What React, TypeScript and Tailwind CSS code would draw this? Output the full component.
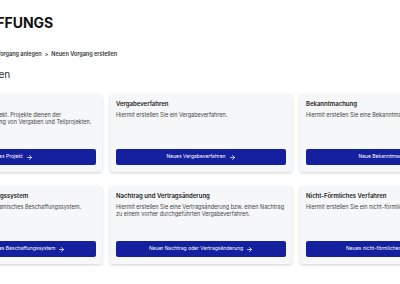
import { ArrowRight } from 'lucide-react';

interface VorgangCard {
  id: string;
  title: string;
  text: string;
  action: string;
}

const cards: VorgangCard[] = [
  {
    id: 'projekt',
    title: 'Projekt',
    text: 'Hiermit erstellen Sie ein Projekt. Projekte dienen der Strukturierung und Verwaltung von Vergaben und Teilprojekten.',
    action: 'Neues Projekt',
  },
  {
    id: 'vergabe',
    title: 'Vergabeverfahren',
    text: 'Hiermit erstellen Sie ein Vergabeverfahren.',
    action: 'Neues Vergabeverfahren',
  },
  {
    id: 'bekanntmachung',
    title: 'Bekanntmachung',
    text: 'Hiermit erstellen Sie eine Bekanntmachung.',
    action: 'Neue Bekanntmachung',
  },
  {
    id: 'dbs',
    title: 'Dynamisches Beschaffungssystem',
    text: 'Hiermit erstellen Sie ein dynamisches Beschaffungssystem.',
    action: 'Neues dynamisches Beschaffungssystem',
  },
  {
    id: 'nachtrag',
    title: 'Nachtrag und Vertragsänderung',
    text: 'Hiermit erstellen Sie eine Vertragsänderung bzw. einen Nachtrag zu einem vorher durchgeführten Vergabeverfahren.',
    action: 'Neuer Nachtrag oder Vertragsänderung',
  },
  {
    id: 'nicht-foermlich',
    title: 'Nicht-Förmliches Verfahren',
    text: 'Hiermit erstellen Sie ein nicht-förmliches Verfahren.',
    action: 'Neues nicht-förmliches Verfahren',
  },
];

export default function App() {
  return (
    <div
      className="w-[400px] h-[284px] overflow-hidden bg-white"
      style={{ fontFamily: 'Inter, "Noto Sans", sans-serif' }}
    >
      <div className="-ml-[80px] w-[600px] pt-[15px]">
        <h1 className="ml-[18px] text-[14px] leading-[16px] font-bold text-[#111]">
          BESCHAFFUNGS
        </h1>

        <nav className="ml-[41px] mt-[19px] flex items-center gap-[3px] text-[5.5px] leading-[8px] font-semibold text-[#333]">
          <span>Startseite</span>
          <span>&gt;</span>
          <span>Vorgang anlegen</span>
          <span>&gt;</span>
          <span>Neuen Vorgang erstellen</span>
        </nav>

        <h2 className="ml-[10px] mt-[10px] text-[10px] leading-[12px] text-[#333]">
          Vorgang anlegen
        </h2>

        <div className="mt-[14px] grid grid-cols-[182px_182px_182px] gap-x-[8px] gap-y-[14px]">
          {cards.map((card) => (
            <div
              key={card.id}
              className="h-[78px] flex flex-col bg-[#f6f7f9] rounded-[3px] shadow-[0_1px_3px_rgba(0,0,0,0.18)] px-[6px] pt-[6px] pb-[7px]"
            >
              <p className="text-[6px] leading-[8px] font-semibold text-[#222]">
                {card.title}
              </p>
              <p className="mt-[4px] text-[5.5px] leading-[7px] text-[#444]">
                {card.text}
              </p>
              <button
                type="button"
                className="mt-auto h-[16px] w-full flex items-center justify-center gap-[3px] rounded-[2px] bg-[#15209e] text-white text-[5px]"
              >
                {card.action}
                <ArrowRight size={7} strokeWidth={2.5} />
              </button>
            </div>
          ))}
        </div>
      </div>
    </div>
  );
}
